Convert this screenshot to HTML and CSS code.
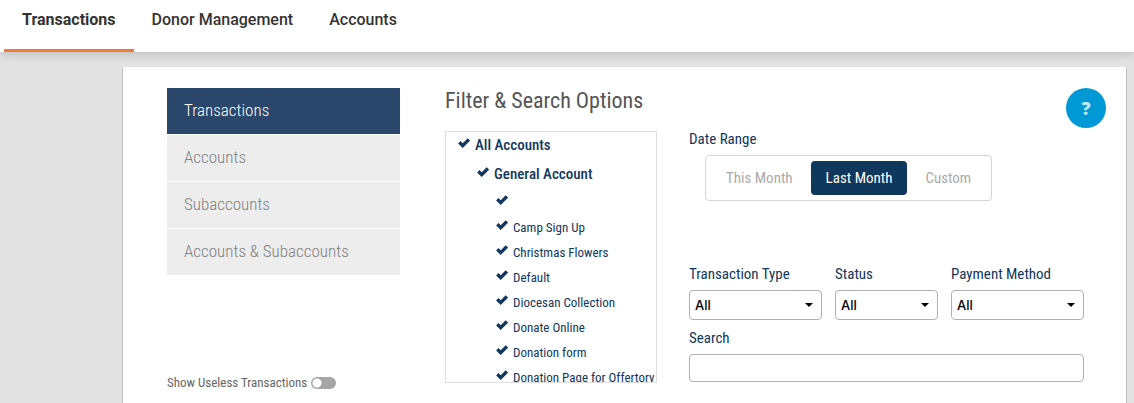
FILE: index.html
```
<!DOCTYPE html>
<html lang="en">

<head>
    <meta charset="UTF-8">
    <meta name="viewport" content="width=device-width, initial-scale=1">
    <title>Transactions</title>
    <link rel="stylesheet" href="styles.css">
</head>

<body>

    <header class="topbar">
        <nav class="tabs">
            <a href="#" class="tab active">Transactions</a>
            <a href="#" class="tab">Donor Management</a>
            <a href="#" class="tab">Accounts</a>
        </nav>
    </header>

    <main class="panel">

        <aside class="sidebar">
            <nav class="side-nav">
                <a href="#" class="side-link active">Transactions</a>
                <a href="#" class="side-link">Accounts</a>
                <a href="#" class="side-link">Subaccounts</a>
                <a href="#" class="side-link">Accounts &amp; Subaccounts</a>
            </nav>
            <label class="toggle">
                Show Useless Transactions
                <input type="checkbox" class="switch">
            </label>
        </aside>

        <section class="filters">
            <div class="filters-head">
                <h1>Filter &amp; Search Options</h1>
                <button type="button" class="help" aria-label="Help">?</button>
            </div>

            <div class="filters-body">
                <!-- Account tree -->
                <div class="account-list">
                    <label class="account level-1"><input type="checkbox" checked>All Accounts</label>
                    <label class="account level-2"><input type="checkbox" checked>General Account</label>
                    <label class="account level-3"><input type="checkbox" checked></label>
                    <label class="account level-3"><input type="checkbox" checked>Camp Sign Up</label>
                    <label class="account level-3"><input type="checkbox" checked>Christmas Flowers</label>
                    <label class="account level-3"><input type="checkbox" checked>Default</label>
                    <label class="account level-3"><input type="checkbox" checked>Diocesan Collection</label>
                    <label class="account level-3"><input type="checkbox" checked>Donate Online</label>
                    <label class="account level-3"><input type="checkbox" checked>Donation form</label>
                    <label class="account level-3"><input type="checkbox" checked>Donation Page for Offertory</label>
                </div>

                <form class="fields">
                    <div class="date-range">
                        <span class="field-label" id="dateRangeLabel">Date Range</span>
                        <div class="segments" role="group" aria-labelledby="dateRangeLabel">
                            <button type="button" class="segment">This Month</button>
                            <button type="button" class="segment active">Last Month</button>
                            <button type="button" class="segment">Custom</button>
                        </div>
                    </div>

                    <div class="selects">
                        <div class="field">
                            <label class="field-label" for="transactionType">Transaction Type</label>
                            <select id="transactionType"><option>All</option></select>
                        </div>
                        <div class="field">
                            <label class="field-label" for="status">Status</label>
                            <select id="status"><option>All</option></select>
                        </div>
                        <div class="field">
                            <label class="field-label" for="paymentMethod">Payment Method</label>
                            <select id="paymentMethod"><option>All</option></select>
                        </div>
                    </div>

                    <div class="field">
                        <label class="field-label" for="search">Search</label>
                        <input type="text" id="search" class="search">
                    </div>
                </form>
            </div>
        </section>

    </main>

</body>

</html>
```
FILE: styles.css
```
* {
    box-sizing: border-box;
}

body {
    margin: 0;
    min-height: 100vh;
    display: flex;
    flex-direction: column;
    background: #e2e2e2;
    color: #10375c;
    font-family: "Roboto Condensed", Roboto, sans-serif;
    font-size: 15px;
}

a {
    text-decoration: none;
}

button {
    font: inherit;
    border: 0;
    cursor: pointer;
}

/* Top tabs */
.topbar {
    background: #fff;
    box-shadow: 0 1px 10px rgba(0, 0, 0, 0.2);
}

.tabs {
    display: flex;
    padding-left: 4px;
}

.tab {
    height: 52px;
    padding: 0 18px;
    line-height: 40px;
    border-bottom: 3px solid transparent;
    color: #333;
    font-family: Roboto, sans-serif;
    font-size: 16px;
    font-weight: 500;
}

.tab.active {
    border-bottom-color: #f0793a;
    font-weight: 700;
}

/* Main panel */
.panel {
    flex: 1;
    display: flex;
    gap: 45px;
    margin: 15px 7px 0 122px;
    padding: 21px 20px 0 44px;
    background: #fff;
    border: 1px solid #bfbfbf;
    border-width: 0 1px;
    border-radius: 2px 2px 0 0;
}

.sidebar {
    flex: 0 0 233px;
    display: flex;
    flex-direction: column;
}

.side-nav {
    display: flex;
    flex-direction: column;
    gap: 1px;
}

.side-link {
    padding: 0 17px 2px;
    line-height: 44px;
    background: #ededed;
    color: #808080;
    font-size: 17px;
    font-weight: 300;
}

.side-link.active {
    background: #2b476b;
    color: #fff;
}

.toggle {
    display: flex;
    align-items: center;
    gap: 4px;
    margin-top: 99px;
    line-height: 18px;
    color: #666;
    font-size: 13px;
}

.switch {
    appearance: none;
    width: 25px;
    height: 12px;
    margin: 0;
    border-radius: 6px;
    background: radial-gradient(circle at 6px 6px, #fff 4px, transparent 5px) #a6a6a6;
}

.switch:checked {
    background: radial-gradient(circle at 19px 6px, #fff 4px, transparent 5px) #10375c;
}

/* Filters */
.filters {
    flex: 1;
    min-width: 0;
}

.filters-head {
    display: flex;
    justify-content: space-between;
    height: 43px;
}

h1 {
    margin: 0;
    line-height: 26px;
    color: #555;
    font-size: 22px;
    font-weight: 400;
}

.help {
    width: 40px;
    height: 40px;
    padding: 0;
    border-radius: 50%;
    background: #0099d6;
    color: #bfe8f8;
    font-family: "Open Sans", sans-serif;
    font-size: 18px;
    font-weight: 800;
}

.filters-body {
    display: flex;
    gap: 32px;
    padding-right: 22px;
}

.account-list {
    flex: 0 0 212px;
    height: 252px;
    overflow: hidden;
    border: 1px solid #ddd;
}

.account {
    display: flex;
    align-items: center;
    gap: 5px;
    height: 25px;
    padding-bottom: 1px;
    font-size: 13px;
    white-space: nowrap;
}

.account input {
    appearance: none;
    flex: none;
    width: 12px;
    height: 14px;
    margin: 0;
}

.account input:checked {
    background: url("data:image/svg+xml,%3Csvg xmlns='http://www.w3.org/2000/svg' viewBox='0 0 12 10'%3E%3Cpath d='M1.3 4.3 4.7 7.6 10.9 1.5' fill='none' stroke='%2310375c' stroke-width='3.4'/%3E%3C/svg%3E") no-repeat top / 12px 10px;
}

.level-1,
.level-2 {
    height: 29px;
    padding-bottom: 3px;
    font-size: 15px;
    font-weight: 500;
}

.level-1 {
    padding-left: 12px;
}

.level-2 {
    padding-left: 31px;
}

.level-3 {
    padding-left: 50px;
}

.fields {
    flex: 1;
    min-width: 0;
}

.field-label {
    display: block;
    line-height: 16px;
}

.date-range {
    margin-bottom: 65px;
}

.segments {
    display: inline-flex;
    gap: 3px;
    margin: 8px 0 0 16px;
    padding: 5px;
    border: 1px solid #d5d5d5;
    border-radius: 4px;
}

.segment {
    height: 34px;
    padding: 0 15px;
    border-radius: 4px;
    background: none;
    color: #aaa;
}

.segment.active {
    background: #10375c;
    color: #fff;
}

.selects {
    display: grid;
    grid-template-columns: 133fr 103fr 133fr;
    gap: 13px;
    margin-bottom: 10px;
}

.field {
    display: flex;
    flex-direction: column;
    gap: 8px;
}

select,
.search {
    width: 100%;
    height: 30px;
    padding: 0 5px;
    border: 1px solid #b0b0b0;
    border-radius: 4px;
    background: #fff;
    font-family: Inter, sans-serif;
    font-size: 13px;
    font-weight: 500;
}

select {
    appearance: none;
    color: #000;
    background: url("data:image/svg+xml,%3Csvg xmlns='http://www.w3.org/2000/svg' viewBox='0 0 8 4'%3E%3Cpath d='M0 0h8L4 4z'/%3E%3C/svg%3E") no-repeat right 8px center / 8px 4px #fff;
}

.search {
    height: 28px;
}
```
